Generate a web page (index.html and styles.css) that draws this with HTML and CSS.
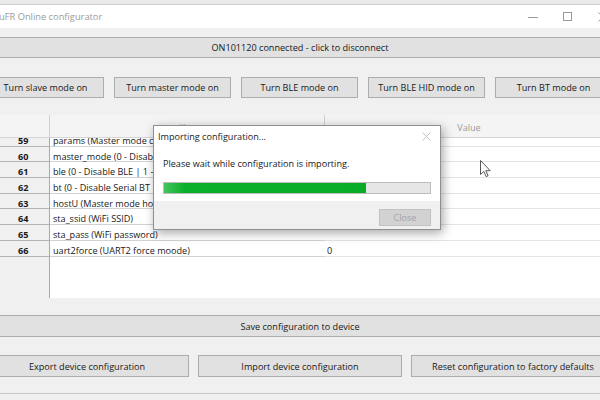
FILE: index.html
```html
<!DOCTYPE html>
<html>
<head>
<meta charset="utf-8">
<title>uFR Online configurator</title>
<link rel="stylesheet" href="styles.css">
</head>
<body>
<div class="window">
  <div class="frametop"></div>
  <div class="titlebar">
    <span class="title">uFR Online configurator</span>
    <span class="caption">
      <span class="capbtn"><svg width="10" height="10" viewBox="0 0 10 10"><path d="M0 5.5h10" stroke="#9a9a9a" stroke-width="1"/></svg></span>
      <span class="capbtn"><svg width="10" height="10" viewBox="0 0 10 10"><rect x="0.5" y="0.5" width="8" height="8" fill="none" stroke="#9a9a9a"/></svg></span>
      <span class="capbtn"><svg width="10" height="10" viewBox="0 0 10 10"><path d="M0.5 0.5l9 9M9.5 0.5l-9 9" stroke="#9a9a9a"/></svg></span>
    </span>
  </div>

  <div class="client">
    <div class="btn bar">ON101120 connected - click to disconnect</div>

    <div class="modes">
      <div class="btn">Turn slave mode on</div>
      <div class="btn">Turn master mode on</div>
      <div class="btn">Turn BLE mode on</div>
      <div class="btn">Turn BLE HID mode on</div>
      <div class="btn">Turn BT mode on</div>
    </div>

    <div class="grid">
      <div class="ghead">
        <div class="rh"></div>
        <div class="ck">Key</div>
        <div class="cv">Value</div>
      </div>
      <div class="gbody">
        <div class="gr first"><div class="rh">59</div><div class="ck">params (Master mode config parameters)</div><div class="cv"></div></div>
        <div class="gr"><div class="rh">60</div><div class="ck">master_mode (0 - Disable master mode | 1 - Enable)</div><div class="cv"></div></div>
        <div class="gr"><div class="rh">61</div><div class="ck">ble (0 - Disable BLE | 1 - Enable BLE)</div><div class="cv"></div></div>
        <div class="gr"><div class="rh">62</div><div class="ck">bt (0 - Disable Serial BT | 1 - Enable)</div><div class="cv"></div></div>
        <div class="gr"><div class="rh">63</div><div class="ck">hostU (Master mode host URL)</div><div class="cv"></div></div>
        <div class="gr"><div class="rh">64</div><div class="ck">sta_ssid (WiFi SSID)</div><div class="cv"></div></div>
        <div class="gr"><div class="rh">65</div><div class="ck">sta_pass (WiFi password)</div><div class="cv"></div></div>
        <div class="gr"><div class="rh">66</div><div class="ck">uart2force (UART2 force moode)</div><div class="cv">0</div></div>
        <div class="gfill"><div class="rh"></div><div class="rest"></div></div>
      </div>
    </div>

    <div class="btn bar save">Save configuration to device</div>

    <div class="actions">
      <div class="btn">Export device configuration</div>
      <div class="btn">Import device configuration</div>
      <div class="btn">Reset configuration to factory defaults</div>
    </div>

    <div class="status"></div>
  </div>
</div>

<div class="dialog">
  <div class="dlg-title">
    <span>Importing configuration...</span>
    <svg width="9" height="9" viewBox="0 0 9 9"><path d="M0.5 0.5l8 8M8.5 0.5l-8 8" stroke="#c4c4c4"/></svg>
  </div>
  <div class="dlg-body">
    <div class="dlg-msg">Please wait while configuration is importing.</div>
    <div class="progress"><div class="fill" style="width:76%"></div></div>
  </div>
  <div class="dlg-foot">
    <div class="dlg-close">Close</div>
  </div>
</div>

<svg class="cursor" width="12" height="18" viewBox="0 0 12 18">
  <path d="M0.5 0.5V14.5L3.8 11.4L6.2 16.6L8.1 15.7L5.8 10.7H10.2Z" fill="#fff" stroke="#555" stroke-width="1" stroke-linejoin="round"/>
</svg>
</body>
</html>
```

FILE: styles.css
```css
html, body { margin:0; padding:0; }
body {
  width:600px; height:400px; overflow:hidden; position:relative;
  background:#f0f0f0;
  font-family:"Open Sans", "Noto Sans", sans-serif; font-size:9.1px; color:#181818;
}

.window { width:626px; margin-left:-13px; }
.frametop { height:4px; background:#e9e9e9; border-bottom:1px solid #cdcdcd; }
.titlebar {
  height:23px; background:#fff;
  display:flex; align-items:center; justify-content:space-between;
  padding-left:12px;
}
.title { color:#9b9b9b; font-size:9.3px; }
.caption { display:flex; margin-right:-7px; }
.capbtn { width:35px; height:23px; display:flex; align-items:center; justify-content:center; }

.client { padding-top:9px; }

.btn {
  box-sizing:border-box; height:21px;
  background:#e1e1e1; border:1px solid #adadad;
  display:flex; align-items:center; justify-content:center;
  white-space:nowrap;
}
.bar { width:100%; }

.modes { display:flex; gap:10px; margin-top:19px; }
.modes .btn { width:117px; flex-shrink:0; }

/* data grid */
.grid { margin-top:17px; height:183px; display:flex; flex-direction:column; background:#fff; }
.ghead { display:grid; grid-template-columns:63px 275px 1fr; height:23px; box-sizing:border-box; border-bottom:1px solid #d5d5d5; background:#f4f4f4; }
.ghead > div { display:flex; align-items:center; justify-content:center; padding-top:3px; color:#9a9a9a; }
.ghead .rh, .ghead .ck { border-right:1px solid #d0d0d0; }
.gbody { flex:1; overflow:hidden; display:flex; flex-direction:column; }
.gr { display:grid; grid-template-columns:63px 275px 1fr; grid-template-rows:15.7px; height:15.7px; flex-shrink:0; }
.gr.first { margin-top:-7px; }
.gr > div { box-sizing:border-box; padding-top:6px; line-height:8.7px; white-space:nowrap; }
.gr .rh { background:#f0f0f0; border-right:1px solid #a9a9a9; border-bottom:1px solid #b4b4b4; padding-left:31px; font-weight:bold; }
.gr .ck { padding-left:3px; border-bottom:1px solid #d2d2d2; }
.gr .cv { padding-left:2px; border-bottom:1px solid #e4e4e4; }
.gfill { flex:1; display:grid; grid-template-columns:63px 1fr; }
.gfill .rh { background:#f0f0f0; border-right:1px solid #a9a9a9; }

.save { margin-top:17px; height:22px; }

.actions { display:flex; justify-content:center; gap:9px; margin-top:18px; }
.actions .btn { width:204px; height:22px; flex-shrink:0; }

.status { margin-top:16px; border-top:1px solid #c9c9c9; height:6px; }

/* modal */
.dialog {
  position:absolute; left:153px; top:125px; width:288px; height:105px;
  box-sizing:border-box; border:1px solid #8f8f8f; background:#fff;
  box-shadow:2px 3px 10px rgba(0,0,0,0.35);
  display:flex; flex-direction:column;
}
.dlg-title { height:20px; display:flex; align-items:center; justify-content:space-between; padding:0 9px 0 4px; color:#222; }
.dlg-body { flex:1; padding:0 9px; }
.dlg-msg { margin-top:11px; line-height:14px; }
.progress { margin-top:11px; height:12px; box-sizing:border-box; border:1px solid #bcbcbc; background:#e6e6e6; }
.progress .fill { height:100%; background:linear-gradient(to right, #45c45e, #0bb02a 10%, #07ad27); }
.dlg-foot { height:28px; background:#f0f0f0; display:flex; justify-content:flex-end; align-items:flex-start; padding:8px 9px 0 0; box-sizing:border-box; }
.dlg-close { width:52px; height:17px; box-sizing:border-box; border:1px solid #c2c2c2; background:#d2d2d2; color:#a3a3a3; display:flex; align-items:center; justify-content:center; }

.cursor { position:absolute; left:480px; top:160px; }
```
